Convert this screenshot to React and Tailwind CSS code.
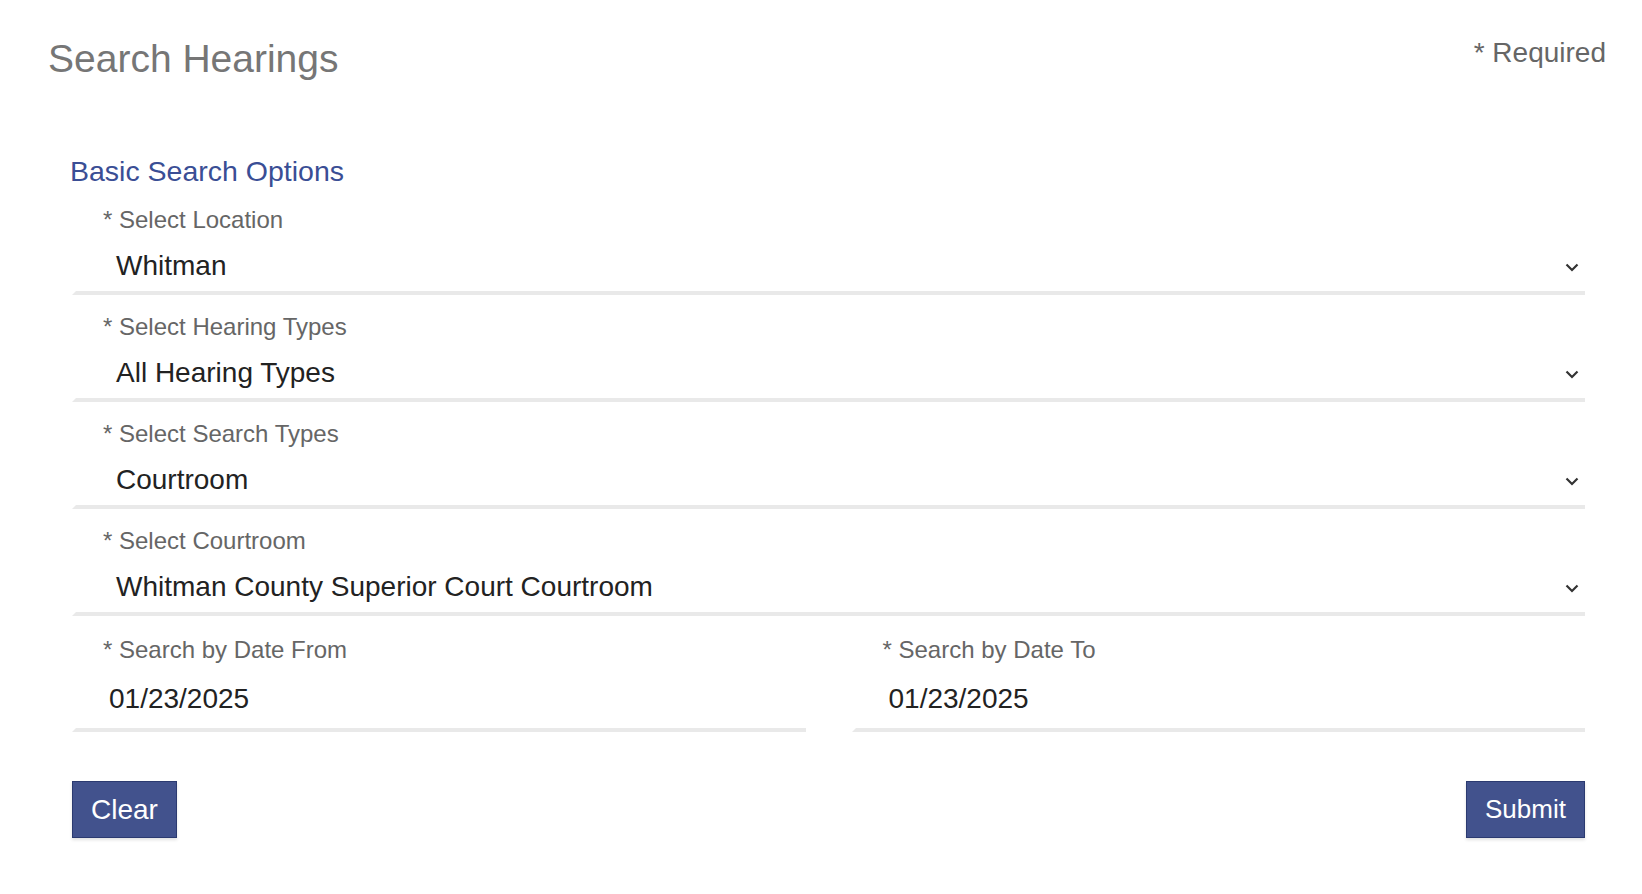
import React from "react";

const fields = [
  { label: "Select Location", value: "Whitman" },
  { label: "Select Hearing Types", value: "All Hearing Types" },
  { label: "Select Search Types", value: "Courtroom" },
  { label: "Select Courtroom", value: "Whitman County Superior Court Courtroom" },
];

const Chevron = () => (
  <svg width="14" height="9" viewBox="0 0 14 9" className="shrink-0 mt-[3px]">
    <polyline
      points="1.5,1.5 7,7 12.5,1.5"
      fill="none"
      stroke="#333"
      strokeWidth="2.2"
    />
  </svg>
);

const SelectField = ({ label, value }) => {
  return (
    <div className="border-l-4 border-l-white border-b-4 border-b-[#e9e9e9] pt-[18px] pb-[8px]">
      <div className="pl-[27px] text-[24px] leading-[28px] text-[#666]">* {label}</div>
      <div className="mt-[15px] flex items-center justify-between pl-[40px] pr-[6px]">
        <span className="text-[28px] leading-[34px] text-[#222]">{value}</span>
        <Chevron />
      </div>
    </div>
  );
};

const DateField = ({ label, value }) => {
  return (
    <div className="border-l-4 border-l-white border-b-4 border-b-[#e9e9e9] pt-[20px] pb-[12px]">
      <div className="pl-[27px] text-[24px] leading-[28px] text-[#666]">* {label}</div>
      <div className="mt-[18px] pl-[33px] text-[28px] leading-[34px] text-[#222]">{value}</div>
    </div>
  );
};

const App = () => {
  return (
    <div className="min-h-[894px] bg-white font-['Liberation_Sans',Arial,sans-serif]">
      <div className="flex items-start justify-between pt-[36px] pl-[48px] pr-[36px]">
        <h1 className="text-[39px] leading-[46px] text-[#767676]">Search Hearings</h1>
        <p className="text-[28px] leading-[34px] text-[#666]">* Required</p>
      </div>
      <div className="pl-[72px] pr-[57px]">
        <h2 className="mt-[72px] -ml-[2px] text-[28.5px] leading-[34px] text-[#3a4e95]">
          Basic Search Options
        </h2>
        <div>
          {fields.map((f) => (
            <SelectField key={f.label} label={f.label} value={f.value} />
          ))}
        </div>
        <div className="grid grid-cols-2 gap-[46px]">
          <DateField label="Search by Date From" value="01/23/2025" />
          <DateField label="Search by Date To" value="01/23/2025" />
        </div>
        <div className="mt-[49px] flex items-start justify-between">
          <button className="flex h-[57px] w-[105px] items-center justify-center border border-[#2b3a70] bg-[#42528d] text-[28px] leading-[34px] text-white shadow-[0_2px_3px_rgba(0,0,0,0.12)]">
            Clear
          </button>
          <button className="flex h-[57px] w-[119px] items-center justify-center border border-[#2b3a70] bg-[#42528d] pb-[2px] text-[26px] leading-[30px] text-white shadow-[0_2px_3px_rgba(0,0,0,0.12)]">
            Submit
          </button>
        </div>
      </div>
    </div>
  );
};

export default App;
